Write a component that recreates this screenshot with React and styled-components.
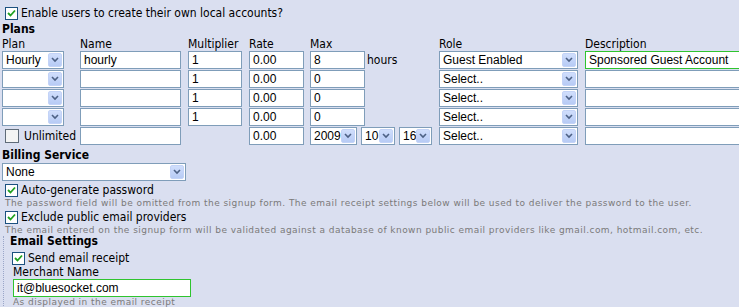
import React from "react";
import styled, { createGlobalStyle } from "styled-components";

const GlobalStyle = createGlobalStyle`
    html, body {
        margin: 0;
        padding: 0;
        background: #dadff0;
    }
    body {
        font-family: "DejaVu Sans Condensed", "DejaVu Sans", sans-serif;
        font-size: 12px;
        color: #000;
    }
`;

const Page = styled.div`
    width: 739px;
    height: 307px;
    overflow: hidden;
    padding: 0 0 0 2px;
    box-sizing: border-box;
`;

const CheckRow = styled.label`
    display: flex;
    align-items: center;
    gap: ${p => p.gap || 3}px;
    height: ${p => p.h || 14}px;
    margin-left: ${p => p.indent || 3}px;
    white-space: nowrap;
`;

const Box = styled.span`
    width: ${p => (p.checked ? 11 : 12)}px;
    height: ${p => (p.checked ? 11 : 12)}px;
    border: 1px solid ${p => (p.checked ? "#1c5180" : "#5f6b78")};
    background: ${p => (p.checked ? "#fff" : "#f4f4f4")};
    display: flex;
    align-items: center;
    justify-content: center;
    flex-shrink: 0;
`;

const Checkbox = ({ checked }) => (
    <Box checked={checked}>
        {checked && (
            <svg width="9" height="9" viewBox="0 0 9 9">
                <polyline points="1,4 3.5,6.5 8,1.5" fill="none" stroke="#21a121" strokeWidth="1.8"/>
            </svg>
        )}
    </Box>
);

const Heading = styled.div`
    font-weight: bold;
    height: ${p => p.h || 14}px;
    line-height: ${p => p.h || 14}px;
    margin-left: ${p => p.indent || 0}px;
`;

const FieldLabel = styled.div`
    height: ${p => p.h || 12}px;
    line-height: ${p => p.h || 12}px;
    margin-left: ${p => p.indent || 0}px;
`;

const PlanGrid = styled.div`
    display: grid;
    grid-template-columns: 78px 108px 61px 61px 129px 146px 160px;
    grid-template-rows: 12px;
    grid-auto-rows: 18px;
    row-gap: 1px;
    align-items: center;
`;

const ColLabel = styled.div`
    height: 12px;
    line-height: 12px;
    align-self: end;
`;

const Input = styled.div`
    box-sizing: border-box;
    width: ${p => p.w}px;
    height: 18px;
    border: 1px solid ${p => (p.valid ? "#2fc42f" : "#7f9db9")};
    background: #fff;
    font-family: "Liberation Sans", Arial, sans-serif;
    font-size: 12px;
    line-height: 16px;
    padding-left: 3px;
    margin-left: ${p => p.indent || 0}px;
    white-space: nowrap;
    overflow: hidden;
`;

const SelectBox = styled.div`
    box-sizing: border-box;
    width: ${p => p.w}px;
    height: 18px;
    border: 1px solid #7f9db9;
    background: #fff;
    display: flex;
    align-items: center;
    padding: 0 1px 0 3px;
    font-family: "Liberation Sans", Arial, sans-serif;
    font-size: 12px;
`;

const SelectText = styled.span`
    flex: 1;
    white-space: nowrap;
    overflow: hidden;
`;

const ArrowBtn = styled.span`
    width: 14px;
    height: 14px;
    border-radius: 2px;
    background: linear-gradient(#d0defc, #b7cbf5);
    border: 1px solid #c3d3f7;
    box-sizing: border-box;
    display: flex;
    align-items: center;
    justify-content: center;
    flex-shrink: 0;
`;

const Select = ({ w, value }) => (
    <SelectBox w={w}>
        <SelectText>{value}</SelectText>
        <ArrowBtn>
            <svg width="8" height="6" viewBox="0 0 8 6">
                <polyline points="1,1 4,4 7,1" fill="none" stroke="#4d6185" strokeWidth="1.6"/>
            </svg>
        </ArrowBtn>
    </SelectBox>
);

const Inline = styled.div`
    display: flex;
    align-items: center;
    gap: ${p => p.gap || 2}px;
    white-space: nowrap;
`;

const Hint = styled.div`
    font-family: "DejaVu Sans", sans-serif;
    font-size: 9px;
    letter-spacing: 0.45px;
    color: #7a7a7a;
    height: ${p => p.h || 13}px;
    line-height: ${p => p.h || 13}px;
    margin-left: ${p => p.indent || 3}px;
    white-space: nowrap;
`;

const Fieldset = styled.div`
    margin: -1px 0 0 1px;
    border-left: 1px dotted #9aa6c8;
    padding-left: 4px;
`;

const Section = styled.div`
    margin-top: ${p => p.top || 0}px;
`;

const rows = [
    { plan: "Hourly", name: "hourly", mult: "1", max: "8", role: "Guest Enabled", desc: "Sponsored Guest Account" },
    { plan: "", name: "", mult: "1", max: "0", role: "Select..", desc: "" },
    { plan: "", name: "", mult: "1", max: "0", role: "Select..", desc: "" },
    { plan: "", name: "", mult: "1", max: "0", role: "Select..", desc: "" },
];

const App = () => (
    <Page>
        <GlobalStyle/>
        <Section top={6}>
            <CheckRow h={14}><Checkbox checked/>Enable users to create their own local accounts?</CheckRow>
        </Section>
        <Heading h={18}>Plans</Heading>
        <PlanGrid>
            <ColLabel>Plan</ColLabel>
            <ColLabel>Name</ColLabel>
            <ColLabel>Multiplier</ColLabel>
            <ColLabel>Rate</ColLabel>
            <ColLabel>Max</ColLabel>
            <ColLabel>Role</ColLabel>
            <ColLabel>Description</ColLabel>
            {rows.map((r, i) => (
                <React.Fragment key={i}>
                    <Select w={62} value={r.plan}/>
                    <Input w={101}>{r.name}</Input>
                    <Input w={54}>{r.mult}</Input>
                    <Input w={55}>0.00</Input>
                    <Inline gap={2}>
                        <Input w={55}>{r.max}</Input>
                        {i === 0 && <span>hours</span>}
                    </Inline>
                    <Select w={139} value={r.role}/>
                    <Input w={160} valid={i === 0}>{r.desc}</Input>
                </React.Fragment>
            ))}
            <CheckRow indent={3} gap={5}><Checkbox/>Unlimited</CheckRow>
            <Input w={101}/>
            <div/>
            <Input w={55}>0.00</Input>
            <Inline gap={4}>
                <Select w={47} value="2009"/>
                <Select w={34} value="10"/>
                <Select w={33} value="16"/>
            </Inline>
            <Select w={139} value="Select.."/>
            <Input w={160}/>
        </PlanGrid>
        <Section top={3}>
            <Heading h={15}>Billing Service</Heading>
            <Select w={184} value="None"/>
        </Section>
        <Section top={2}>
            <CheckRow h={14}><Checkbox checked/>Auto-generate password</CheckRow>
            <Hint>The password field will be omitted from the signup form. The email receipt settings below will be used to deliver the password to the user.</Hint>
            <CheckRow h={14}><Checkbox checked/>Exclude public email providers</CheckRow>
            <Hint>The email entered on the signup form will be validated against a database of known public email providers like gmail.com, hotmail.com, etc.</Hint>
        </Section>
        <Fieldset>
            <Heading h={11} indent={2}>Email Settings</Heading>
            <Section top={3}>
                <CheckRow h={16} indent={4}><Checkbox checked/>Send email receipt</CheckRow>
                <FieldLabel h={12} indent={5}>Merchant Name</FieldLabel>
                <Section top={1}>
                    <Input w={178} indent={5} valid>it@bluesocket.com</Input>
                </Section>
                <Hint h={11} indent={5}>As displayed in the email receipt</Hint>
            </Section>
        </Fieldset>
    </Page>
);

export default App;
